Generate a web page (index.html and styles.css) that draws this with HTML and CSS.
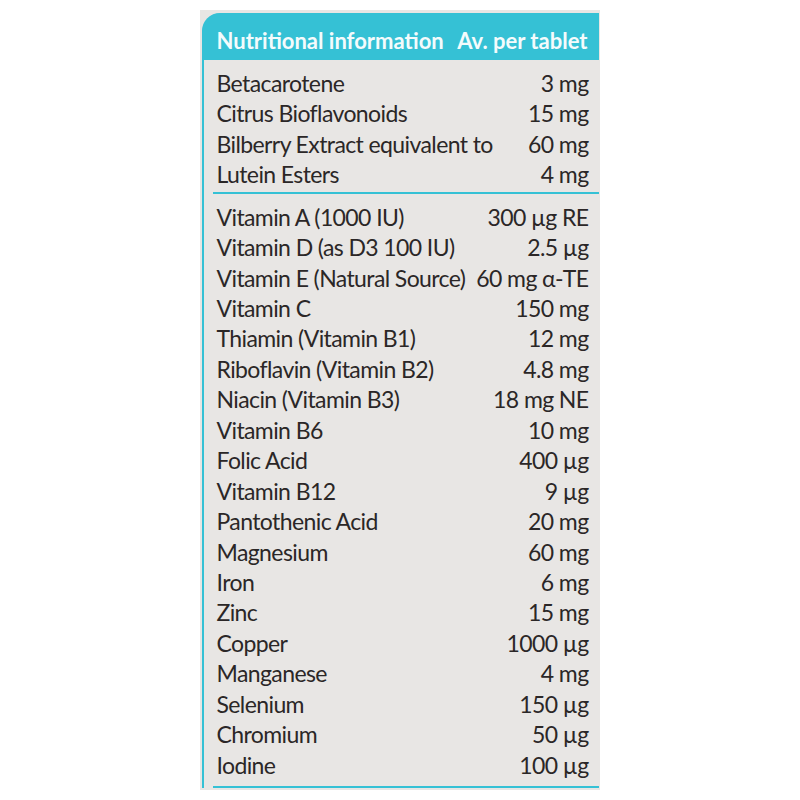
FILE: index.html
```html
<!DOCTYPE html>
<html>
<head>
<meta charset="utf-8">
<link rel="stylesheet" href="styles.css">
</head>
<body>
<div class="photo">
  <div class="label">
    <div class="head">
      <span>Nutritional information</span>
      <span>Av. per tablet</span>
    </div>
    <div class="section first">
      <div class="row"><span>Betacarotene</span><span>3 mg</span></div>
      <div class="row"><span>Citrus Bioflavonoids</span><span>15 mg</span></div>
      <div class="row"><span>Bilberry Extract equivalent to</span><span>60 mg</span></div>
      <div class="row"><span>Lutein Esters</span><span>4 mg</span></div>
    </div>
    <div class="section second">
      <div class="row"><span>Vitamin A (1000 IU)</span><span>300 µg RE</span></div>
      <div class="row"><span>Vitamin D (as D3 100 IU)</span><span>2.5 µg</span></div>
      <div class="row"><span>Vitamin E (Natural Source)</span><span>60 mg α-TE</span></div>
      <div class="row"><span>Vitamin C</span><span>150 mg</span></div>
      <div class="row"><span>Thiamin (Vitamin B1)</span><span>12 mg</span></div>
      <div class="row"><span>Riboflavin (Vitamin B2)</span><span>4.8 mg</span></div>
      <div class="row"><span>Niacin (Vitamin B3)</span><span>18 mg NE</span></div>
      <div class="row"><span>Vitamin B6</span><span>10 mg</span></div>
      <div class="row"><span>Folic Acid</span><span>400 µg</span></div>
      <div class="row"><span>Vitamin B12</span><span>9 µg</span></div>
      <div class="row"><span>Pantothenic Acid</span><span>20 mg</span></div>
      <div class="row"><span>Magnesium</span><span>60 mg</span></div>
      <div class="row"><span>Iron</span><span>6 mg</span></div>
      <div class="row"><span>Zinc</span><span>15 mg</span></div>
      <div class="row"><span>Copper</span><span>1000 µg</span></div>
      <div class="row"><span>Manganese</span><span>4 mg</span></div>
      <div class="row"><span>Selenium</span><span>150 µg</span></div>
      <div class="row"><span>Chromium</span><span>50 µg</span></div>
      <div class="row"><span>Iodine</span><span>100 µg</span></div>
    </div>
  </div>
</div>
</body>
</html>
```

FILE: styles.css
```css
html, body {
  margin: 0;
  padding: 0;
  background: #ffffff;
}
body {
  display: flex;
  justify-content: center;
  padding-top: 10px;
  font-family: Lato, "Open Sans", sans-serif;
}
.photo {
  width: 397px;
  height: 777px;
  background: #e8e6e4;
  padding: 3px 1px 0 2px;
  margin-left: -1px;
}
.label {
  border-left: 2px solid #35c1d5;
  border-top-left-radius: 20px;
  height: 775px;
  display: flex;
  flex-direction: column;
}
.head {
  background: #35c1d5;
  border-top-left-radius: 18px;
  margin-left: -2px;
  height: 49px;
  box-sizing: border-box;
  padding: 8px 11px 0 15px;
  display: flex;
  justify-content: space-between;
  align-items: center;
  color: #f4fbfc;
  font-weight: 700;
  font-size: 22px;
  white-space: nowrap;
}
.section {
  margin-left: 9px;
  padding: 0 10px 0 4px;
  color: #2b2727;
  font-size: 23px;
  letter-spacing: -0.6px;
  white-space: nowrap;
}
.first {
  padding-top: 8px;
  padding-bottom: 2px;
  border-bottom: 2px solid #35c1d5;
}
.second {
  padding-top: 8px;
  padding-bottom: 6px;
  border-bottom: 2px solid #35c1d5;
}
.row {
  display: flex;
  justify-content: space-between;
  gap: 8px;
  height: 30.45px;
  line-height: 30px;
}
```
